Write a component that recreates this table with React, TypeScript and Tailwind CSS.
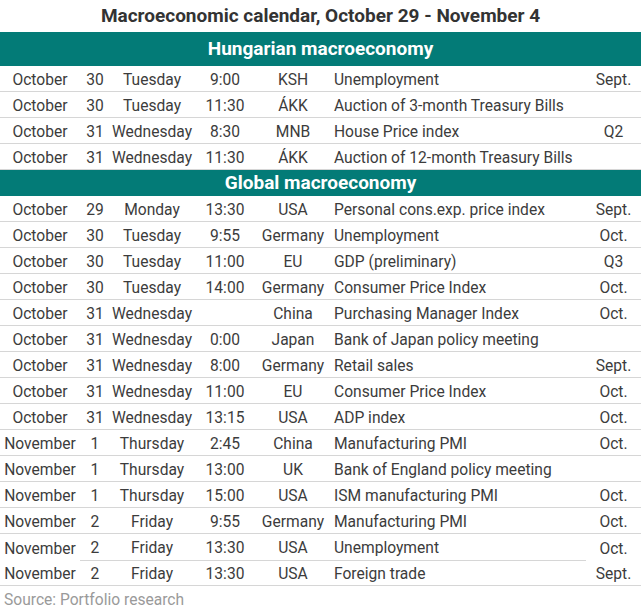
type Row = [string, string, string, string, string, string, string];

const hungarian: Row[] = [
  ["October", "30", "Tuesday", "9:00", "KSH", "Unemployment", "Sept."],
  ["October", "30", "Tuesday", "11:30", "ÁKK", "Auction of 3-month Treasury Bills", ""],
  ["October", "31", "Wednesday", "8:30", "MNB", "House Price index", "Q2"],
  ["October", "31", "Wednesday", "11:30", "ÁKK", "Auction of 12-month Treasury Bills", ""],
];

const global: Row[] = [
  ["October", "29", "Monday", "13:30", "USA", "Personal cons.exp. price index", "Sept."],
  ["October", "30", "Tuesday", "9:55", "Germany", "Unemployment", "Oct."],
  ["October", "30", "Tuesday", "11:00", "EU", "GDP (preliminary)", "Q3"],
  ["October", "30", "Tuesday", "14:00", "Germany", "Consumer Price Index", "Oct."],
  ["October", "31", "Wednesday", "", "China", "Purchasing Manager Index", "Oct."],
  ["October", "31", "Wednesday", "0:00", "Japan", "Bank of Japan policy meeting", ""],
  ["October", "31", "Wednesday", "8:00", "Germany", "Retail sales", "Sept."],
  ["October", "31", "Wednesday", "11:00", "EU", "Consumer Price Index", "Oct."],
  ["October", "31", "Wednesday", "13:15", "USA", "ADP index", "Oct."],
  ["November", "1", "Thursday", "2:45", "China", "Manufacturing PMI", "Oct."],
  ["November", "1", "Thursday", "13:00", "UK", "Bank of England policy meeting", ""],
  ["November", "1", "Thursday", "15:00", "USA", "ISM manufacturing PMI", "Oct."],
  ["November", "2", "Friday", "9:55", "Germany", "Manufacturing PMI", "Oct."],
  ["November", "2", "Friday", "13:30", "USA", "Unemployment", "Oct."],
  ["November", "2", "Friday", "13:30", "USA", "Foreign trade", "Sept."],
];

const cellBase = "flex h-full items-center pt-[3px]";

function CalRow({ row, partial }: { row: Row; partial?: boolean }) {
  const mid = partial ? "border-b border-[#d6d6d6]" : "";
  return (
    <div
      className={`grid h-[26px] grid-cols-[80px_30px_84px_62px_74px_256px_55px] text-[15.6px] text-[#3c3c3c] ${
        partial ? "" : "border-b border-[#d6d6d6]"
      }`}
    >
      <div className={`${cellBase} justify-center`}>{row[0]}</div>
      <div className={`${cellBase} justify-center ${mid}`}>{row[1]}</div>
      <div className={`${cellBase} justify-center ${mid}`}>{row[2]}</div>
      <div className={`${cellBase} justify-center ${mid}`}>{row[3]}</div>
      <div className={`${cellBase} justify-center ${mid}`}>{row[4]}</div>
      <div className={`${cellBase} pl-1 ${mid}`}>{row[5]}</div>
      <div className={`${cellBase} justify-center`}>{row[6]}</div>
    </div>
  );
}

function SectionHeader({ title, tall }: { title: string; tall?: boolean }) {
  return (
    <div
      className={`flex items-center justify-center bg-[#037b77] text-[19px] font-bold text-white ${
        tall ? "h-[34px]" : "h-[26px]"
      }`}
    >
      {title}
    </div>
  );
}

export default function App() {
  return (
    <div className="h-[613px] w-[641px] bg-white font-['Roboto',sans-serif]">
      <h1 className="flex h-[32px] items-center justify-center pt-[1px] text-[19px] font-bold text-[#333]">
        Macroeconomic calendar, October 29 - November 4
      </h1>
      <SectionHeader title="Hungarian macroeconomy" tall />
      {hungarian.map((r, i) => (
        <CalRow key={`h${i}`} row={r} />
      ))}
      <SectionHeader title="Global macroeconomy" />
      {global.map((r, i) => (
        <CalRow key={`g${i}`} row={r} partial={i === global.length - 2} />
      ))}
      <div className="pl-1 pt-[3px] text-[15.6px] text-[#9a9a9a]">Source: Portfolio research</div>
    </div>
  );
}
